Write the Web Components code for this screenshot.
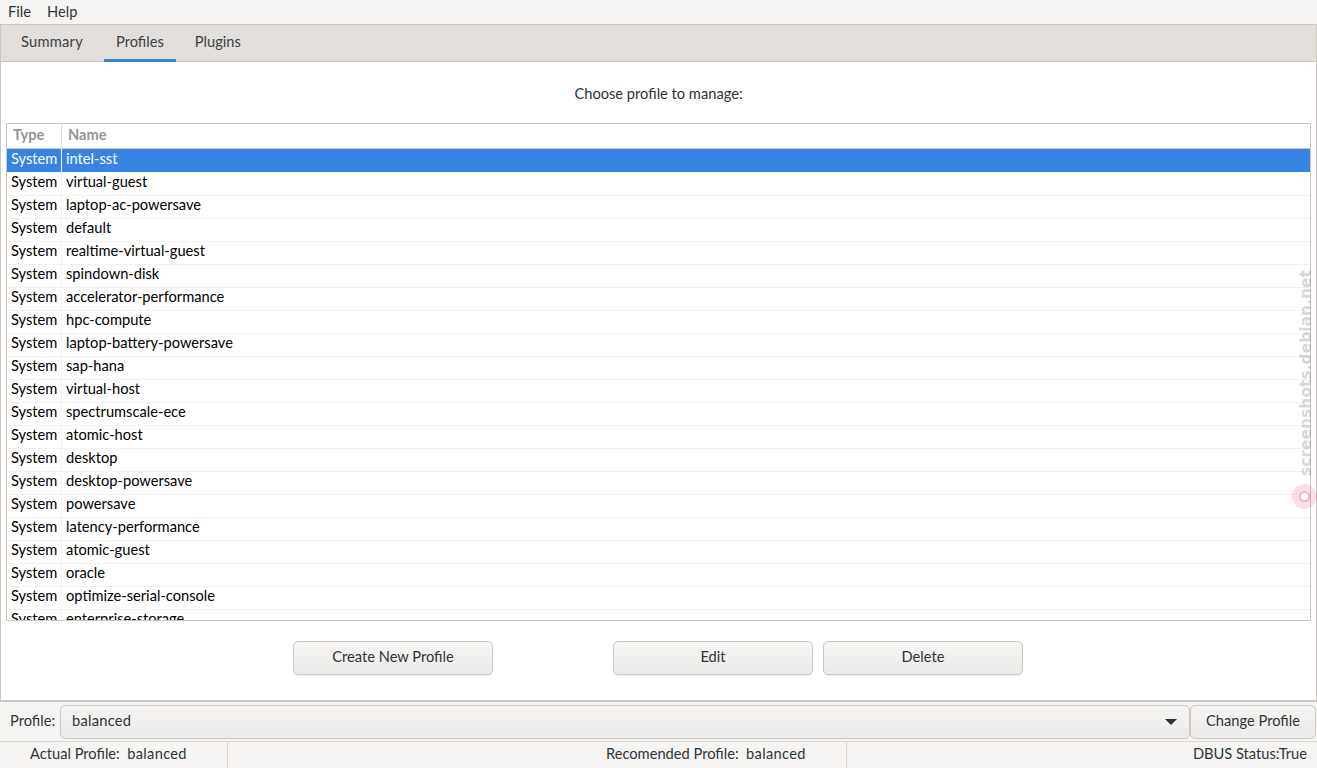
<!DOCTYPE html>
<html>
<head>
<meta charset="utf-8">
<title>Tuned</title>
<style>
  html, body { margin: 0; height: 100%; background: #f6f5f4; overflow: hidden; }
  body { font: 14.67px Lato, "Noto Sans", sans-serif; color: #2e3436; }
  tuned-app { height: 768px; }
</style>
</head>
<body>
<tuned-app></tuned-app>

<template id="btn-tpl">
  <style>
    :host { display: block; box-sizing: border-box; width: 200px; height: 34px; }
    .btn {
      box-sizing: border-box; height: 100%; display: flex; align-items: center; justify-content: center;
      padding-bottom: 4px;
      border: 1px solid #cdc7c2; border-radius: 5px;
      background: linear-gradient(#f6f5f4, #edebe9);
      box-shadow: 0 1px 1px rgba(0, 0, 0, 0.07);
      color: #2e3436;
    }
  </style>
  <div class="btn"><slot></slot></div>
</template>

<script>
  const PROFILES = ['intel-sst', 'virtual-guest', 'laptop-ac-powersave', 'default', 'realtime-virtual-guest',
    'spindown-disk', 'accelerator-performance', 'hpc-compute', 'laptop-battery-powersave', 'sap-hana',
    'virtual-host', 'spectrumscale-ece', 'atomic-host', 'desktop', 'desktop-powersave', 'powersave',
    'latency-performance', 'atomic-guest', 'oracle', 'optimize-serial-console', 'enterprise-storage'];

  class GtkButton extends HTMLElement {
    constructor() {
      super();
      this.attachShadow({ mode: 'open' });
      this.shadowRoot.appendChild(document.getElementById('btn-tpl').content.cloneNode(true));
    }
  }

  class MenuBar extends HTMLElement {
    constructor() {
      super();
      this.attachShadow({ mode: 'open' });
      this.shadowRoot.innerHTML = `
        <style>
          :host { display: flex; height: 24px; align-items: center; background: #f6f5f4; color: #2e3436; padding: 0 0 2px 8px; gap: 16px; box-sizing: border-box; }
        </style>
        <span>File</span><span>Help</span>`;
    }
  }

  class TabBar extends HTMLElement {
    constructor() {
      super();
      this.attachShadow({ mode: 'open' });
      this.shadowRoot.innerHTML = `
        <style>
          :host { display: flex; height: 37px; box-sizing: border-box; background: #e1dedb; border-bottom: 1px solid #cdc7c2; padding-left: 8px; gap: 9px; flex: none; }
          .tab { display: flex; align-items: center; padding: 0 12px 1px; color: #3d4345; border-bottom: 3px solid transparent; box-sizing: border-box; height: 37px; }
          .tab:first-of-type { letter-spacing: 0.25px; }
          .tab:last-child { margin-left: -2px; }
          .tab.on { border-bottom-color: #3584e4; }
        </style>
        <div class="tab">Summary</div>
        <div class="tab on">Profiles</div>
        <div class="tab">Plugins</div>`;
    }
  }

  class ProfileList extends HTMLElement {
    constructor() {
      super();
      this.attachShadow({ mode: 'open' });
      const rows = PROFILES.map((p, i) =>
        `<div class="row${i === 0 ? ' sel' : ''}"><span class="t">System</span><span class="n">${p}</span></div>`).join('');
      this.shadowRoot.innerHTML = `
        <style>
          :host { display: flex; flex-direction: column; box-sizing: border-box; height: 498px; margin: 0 5px; border: 1px solid #cdc7c2; background: #fff; overflow: hidden; }
          .head { display: flex; flex: none; height: 25px; box-sizing: border-box; border-bottom: 1px solid #cdc7c2; color: #929595; font-weight: 700; align-items: center; }
          .head span { height: 100%; box-sizing: border-box; display: flex; align-items: center; padding: 0 0 4px 6px; }
          .head span:first-child { width: 55px; border-right: 1px solid #dfdcd9; }
          .rows { flex: 1; overflow: hidden; }
          /* the row line sits on top, the line under the selected row stays white */
          .row { display: flex; height: 23px; box-sizing: border-box; border-top: 1px solid #f3f2f1; color: #000; }
          .t { width: 55px; box-sizing: border-box; padding-left: 4px; border-right: 1px solid #f3f2f1; height: 23px; margin-top: -1px; line-height: 19px; flex: none; }
          .n { padding-left: 4px; line-height: 19px; margin-top: -1px; }
          .sel { background: #3584e4; color: #fff; border-top-color: #3584e4; }
          .sel .t { border-right-color: #fff; }
          .sel + .row { border-top-color: #fff; }
        </style>
        <div class="head"><span>Type</span><span>Name</span></div>
        <div class="rows">${rows}</div>`;
    }
  }

  class ProfilesPage extends HTMLElement {
    constructor() {
      super();
      this.attachShadow({ mode: 'open' });
      this.shadowRoot.innerHTML = `
        <style>
          :host { display: flex; flex-direction: column; flex: 1; background: #fff; min-height: 0; }
          .title { height: 61px; box-sizing: border-box; padding-top: 2px; flex: none; display: flex; align-items: center; justify-content: center; color: #2e3436; }
          .actions { display: flex; justify-content: center; padding: 20px 1px 0 0; }
          .gap-l { width: 120px; }
          .gap-s { width: 10px; }
        </style>
        <div class="title">Choose profile to manage:</div>
        <profile-list></profile-list>
        <div class="actions">
          <gtk-button>Create New Profile</gtk-button>
          <div class="gap-l"></div>
          <gtk-button>Edit</gtk-button>
          <div class="gap-s"></div>
          <gtk-button>Delete</gtk-button>
        </div>`;
    }
  }

  class ProfileBar extends HTMLElement {
    constructor() {
      super();
      this.attachShadow({ mode: 'open' });
      this.shadowRoot.innerHTML = `
        <style>
          :host { display: flex; align-items: center; height: 40px; box-sizing: border-box; padding: 3px 1px 2px 10px; border-bottom: 1px solid #dad6d2; background: #f6f5f4; flex: none; }
          .label { width: 50px; flex: none; padding-bottom: 4px; }
          .combo { flex: 1; height: 34px; box-sizing: border-box; display: flex; align-items: center; justify-content: space-between; padding: 0 11px; border: 1px solid #cdc7c2; border-radius: 5px; background: linear-gradient(#f6f5f4, #edebe9); }
          .combo span { padding-bottom: 4px; letter-spacing: 0.25px; }
          .change { flex: none; width: 126px; height: 34px; box-sizing: border-box; display: flex; align-items: center; justify-content: center; padding-bottom: 4px; border: 1px solid #cdc7c2; border-radius: 5px; background: linear-gradient(#f6f5f4, #edebe9); }
          svg { display: block; margin-right: 1px; }
        </style>
        <span class="label">Profile:</span>
        <div class="combo"><span>balanced</span>
          <svg width="12" height="6" viewBox="0 0 12 6"><path d="M0 0h12L6 6z" fill="#2e3436"/></svg>
        </div>
        <div class="change">Change Profile</div>`;
    }
  }

  class StatusBar extends HTMLElement {
    constructor() {
      super();
      this.attachShadow({ mode: 'open' });
      this.shadowRoot.innerHTML = `
        <style>
          :host { display: grid; grid-template-columns: 228px 619px 1fr; height: 26px; background: #f6f5f4; flex: none; }
          div { display: flex; align-items: center; box-sizing: border-box; padding-bottom: 4px; border-right: 1px solid #dad6d2; white-space: pre; min-width: 0; }
          .actual { padding-left: 30px; }
          .recommended { padding-left: 378px; }
          .dbus { border-right: 0; justify-content: flex-end; padding-right: 10px; }
          b { font-weight: 400; letter-spacing: 0.3px; }
        </style>
        <div class="actual">Actual Profile:  <b>balanced</b></div>
        <div class="recommended">Recomended Profile:  <b>balanced</b></div>
        <div class="dbus">DBUS Status:True</div>`;
    }
  }

  class WaterMark extends HTMLElement {
    constructor() {
      super();
      this.attachShadow({ mode: 'open' });
      this.shadowRoot.innerHTML = `
        <style>
          :host { position: absolute; left: 1292px; top: 271px; width: 25px; height: 240px; pointer-events: none; }
          .txt { position: absolute; left: 5px; top: 0; height: 205px; writing-mode: vertical-rl; transform: rotate(180deg); font: bold 15.5px "DejaVu Sans", sans-serif; color: rgba(130, 130, 130, 0.32); white-space: nowrap; line-height: 18px; }
          svg { position: absolute; left: 0; top: 213px; }
        </style>
        <div class="txt">screenshots.debian.net</div>
        <svg width="25" height="25" viewBox="0 0 25 25"><circle cx="12.5" cy="12.5" r="12.5" fill="#d70a53" fill-opacity=".13"/><circle cx="12.5" cy="12.5" r="4.5" fill="#fff"/><circle cx="12.5" cy="12.5" r="4.5" fill="none" stroke="#d70a53" stroke-opacity=".25" stroke-width="2"/></svg>`;
    }
  }

  class TunedApp extends HTMLElement {
    constructor() {
      super();
      this.attachShadow({ mode: 'open' });
      this.shadowRoot.innerHTML = `
        <style>
          :host { display: flex; flex-direction: column; position: relative; overflow: hidden; }
          .notebook { flex: 1; min-height: 0; display: flex; flex-direction: column; border: 1px solid #cdc7c2; border-bottom-width: 2px; }
        </style>
        <menu-bar></menu-bar>
        <div class="notebook">
          <tab-bar></tab-bar>
          <profiles-page></profiles-page>
        </div>
        <profile-bar></profile-bar>
        <status-bar></status-bar>
        <water-mark></water-mark>`;
    }
  }

  customElements.define('gtk-button', GtkButton);
  customElements.define('menu-bar', MenuBar);
  customElements.define('tab-bar', TabBar);
  customElements.define('profile-list', ProfileList);
  customElements.define('profiles-page', ProfilesPage);
  customElements.define('profile-bar', ProfileBar);
  customElements.define('status-bar', StatusBar);
  customElements.define('water-mark', WaterMark);
  customElements.define('tuned-app', TunedApp);
</script>
</body>
</html>
